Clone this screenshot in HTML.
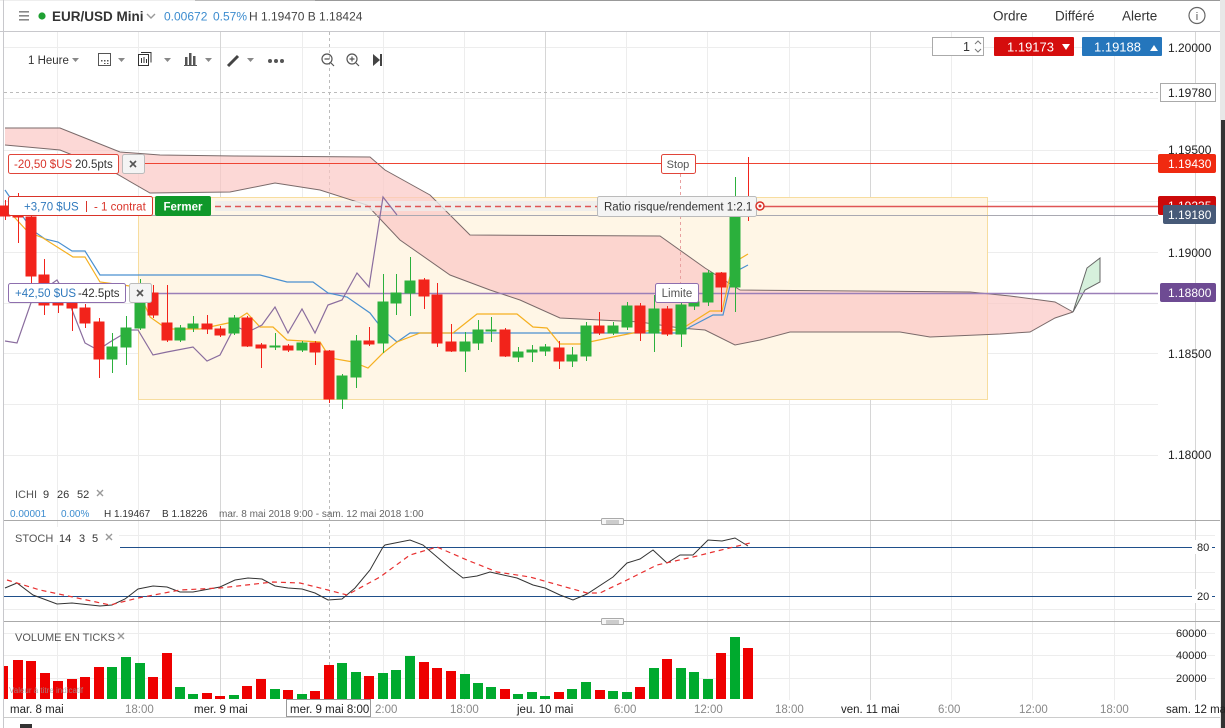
<!DOCTYPE html>
<html><head><meta charset="utf-8"><style>
html,body{margin:0;padding:0;width:1225px;height:728px;overflow:hidden;background:#fff;font-family:"Liberation Sans",sans-serif;}
svg{display:block}
text{font-family:"Liberation Sans",sans-serif}
</style></head><body>
<svg width="1225" height="728" viewBox="0 0 1225 728" xmlns="http://www.w3.org/2000/svg">
<rect x="0" y="0" width="1225" height="728" fill="#fff"/>
<line x1="0" y1="31.5" x2="1220" y2="31.5" stroke="#c8c8cc"/>
<line x1="195" y1="0.5" x2="315" y2="0.5" stroke="#bbb"/>
<line x1="0" y1="0.5" x2="195" y2="0.5" stroke="#eee"/>
<line x1="315" y1="0.5" x2="1220" y2="0.5" stroke="#999"/>
<line x1="3.5" y1="0" x2="3.5" y2="728" stroke="#c8c8cc"/>
<rect x="1220" y="0" width="5" height="728" fill="#e8e8e8"/>
<rect x="1221" y="120" width="4" height="608" fill="#333"/>
<g fill="#888"><rect x="19" y="11" width="10" height="1.6"/><rect x="19" y="15" width="10" height="1.6"/><rect x="19" y="19" width="10" height="1.6"/></g>
<circle cx="42" cy="16" r="3.6" fill="#1ea032"/>
<text x="52" y="21" font-size="13.5" font-weight="bold" fill="#333">EUR/USD Mini</text>
<path d="M147 14 l4 4 l4 -4" stroke="#999" fill="none" stroke-width="1.4"/>
<text x="164" y="20.5" font-size="12" fill="#3c8ccf">0.00672</text>
<text x="213" y="20.5" font-size="12" fill="#3c8ccf">0.57%</text>
<text x="249" y="20.5" font-size="12" fill="#444">H 1.19470 B 1.18424</text>
<text x="993" y="20.5" font-size="13.5" fill="#333">Ordre</text>
<text x="1055" y="20.5" font-size="13.5" fill="#333">Différé</text>
<text x="1122" y="20.5" font-size="13.5" fill="#333">Alerte</text>
<circle cx="1197" cy="15.5" r="8" fill="none" stroke="#666" stroke-width="1.2"/>
<text x="1197" y="20" font-size="11" fill="#555" text-anchor="middle" font-family="Liberation Serif">i</text>

<g stroke="#ededed" stroke-width="1">
<line x1="57.5" y1="32" x2="57.5" y2="700"/><line x1="138.5" y1="32" x2="138.5" y2="700"/>
<line x1="302.5" y1="32" x2="302.5" y2="700"/><line x1="383.5" y1="32" x2="383.5" y2="700"/><line x1="464.5" y1="32" x2="464.5" y2="700"/>
<line x1="626.5" y1="32" x2="626.5" y2="700"/><line x1="707.5" y1="32" x2="707.5" y2="700"/><line x1="789.5" y1="32" x2="789.5" y2="700"/>
<line x1="951.5" y1="32" x2="951.5" y2="700"/><line x1="1032.5" y1="32" x2="1032.5" y2="700"/><line x1="1114.5" y1="32" x2="1114.5" y2="700"/>
<line x1="4" y1="47.5" x2="1158" y2="47.5"/><line x1="4" y1="98.5" x2="1158" y2="98.5"/><line x1="4" y1="150.5" x2="1158" y2="150.5"/>
<line x1="4" y1="201.5" x2="1158" y2="201.5"/><line x1="4" y1="252.5" x2="1158" y2="252.5"/><line x1="4" y1="303.5" x2="1158" y2="303.5"/>
<line x1="4" y1="353.5" x2="1158" y2="353.5"/><line x1="4" y1="404.5" x2="1158" y2="404.5"/><line x1="4" y1="455.5" x2="1158" y2="455.5"/>
<line x1="4" y1="572.5" x2="1215" y2="572.5"/><line x1="4" y1="535.5" x2="1215" y2="535.5"/><line x1="4" y1="609.5" x2="1215" y2="609.5"/>
<line x1="4" y1="633.5" x2="1215" y2="633.5"/><line x1="4" y1="655.5" x2="1215" y2="655.5"/><line x1="4" y1="678.5" x2="1215" y2="678.5"/>
</g>
<g stroke="#d6d6d6"><line x1="220.5" y1="32" x2="220.5" y2="700"/><line x1="545.5" y1="32" x2="545.5" y2="700"/><line x1="870.5" y1="32" x2="870.5" y2="700"/><line x1="1195.5" y1="32" x2="1195.5" y2="700"/></g>
<line x1="329.5" y1="32" x2="329.5" y2="700" stroke="#bbb" stroke-dasharray="3,3"/>
<line x1="4" y1="92.5" x2="1158" y2="92.5" stroke="#bbb" stroke-dasharray="3,3"/>

<text x="28" y="64" font-size="11.5" fill="#333">1 Heure</text>
<path d="M72 58 h7 l-3.5 4z" fill="#888"/>
<rect x="98.5" y="53.5" width="12" height="12" fill="none" stroke="#555"/><g fill="#555"><rect x="101" y="60" width="1.5" height="1.5"/><rect x="104" y="60" width="1.5" height="1.5"/><rect x="107" y="60" width="1.5" height="1.5"/><rect x="104" y="63" width="1.5" height="1"/><rect x="107" y="63" width="1.5" height="1"/></g>
<path d="M118 58 h7 l-3.5 4z" fill="#888"/>
<rect x="138.5" y="54.5" width="10" height="11" fill="none" stroke="#333"/><path d="M141 52.5 h10 v10" fill="none" stroke="#333"/><path d="M141.5 58v5M144 57v6M146.5 59v4" stroke="#333"/>
<path d="M164 58 h7 l-3.5 4z" fill="#888"/>
<g fill="#555"><rect x="185" y="57" width="2.5" height="8"/><rect x="189" y="53" width="2.5" height="12"/><rect x="193" y="56" width="2.5" height="9"/><rect x="184" y="65" width="13" height="1"/></g>
<path d="M205 58 h7 l-3.5 4z" fill="#888"/>
<path d="M228 66 l10 -10" stroke="#444" stroke-width="3"/>
<path d="M247 58 h7 l-3.5 4z" fill="#888"/>
<g fill="#555"><circle cx="270" cy="61" r="2"/><circle cx="276" cy="61" r="2"/><circle cx="282" cy="61" r="2"/></g>
<circle cx="327" cy="59" r="5" fill="none" stroke="#555" stroke-width="1.2"/><path d="M324.5 59h5M331 63l3 3" stroke="#555" stroke-width="1.2"/>
<circle cx="352" cy="59" r="5" fill="none" stroke="#555" stroke-width="1.2"/><path d="M349.5 59h5M352 56.5v5M356 63l3 3" stroke="#555" stroke-width="1.2"/>
<path d="M373 54 l7 6 l-7 6z" fill="#444"/><rect x="380" y="54" width="2" height="12" fill="#444"/>

<rect x="932.5" y="37.5" width="51" height="18" fill="#fff" stroke="#aaa"/>
<text x="970" y="51" font-size="12.5" fill="#333" text-anchor="end">1</text>
<path d="M975 44 l3 -3 l3 3M975 49 l3 3 l3 -3" fill="none" stroke="#777"/>
<rect x="994" y="37" width="80" height="19" fill="#d50d0d" rx="1"/>
<text x="1007" y="51.5" font-size="13" fill="#fff">1.19173</text><path d="M1062 44 h8 l-4 6z" fill="#fff"/>
<rect x="1082" y="37" width="80" height="19" fill="#2576bc" rx="1"/>
<text x="1094" y="51.5" font-size="13" fill="#fff">1.19188</text><path d="M1150 51 h8 l-4 -6z" fill="#fff"/>

<rect x="138.5" y="197.5" width="849" height="202" fill="#fff6e6" stroke="#f7dd9f"/>

<path d="M5 128 L60 128 L90 140 L120 152 L160 155 L235 156 L370 157 L385 170 L430 195 L470 235 L660 236 L705 268 L740 290 L970 292 L1010 296 L1055 302 L1073 312 L1055 318 L1030 332 L1000 334 L930 337 L900 332 L790 332 L760 340 L735 345 L705 330 L680 328 L640 322 L600 320 L560 318 L520 300 L490 290 L450 275 L400 240 L367 205 L320 190 L275 183 L230 192 L150 193 L110 170 L60 150 L5 145 Z" fill="#fbc8c5" fill-opacity="0.7"/>
<path d="M5 128 L60 128 L90 140 L120 152 L160 155 L235 156 L370 157 L385 170 L430 195 L470 235 L660 236 L705 268 L740 290 L970 292 L1010 296 L1055 302 L1073 312" fill="none" stroke="#7a6a6a" stroke-width="1"/>
<path d="M5 145 L60 150 L110 170 L150 193 L230 192 L275 183 L320 190 L367 205 L400 240 L450 275 L490 290 L520 300 L560 318 L600 320 L640 322 L680 328 L705 330 L735 345 L760 340 L790 332 L900 332 L930 337 L1000 334 L1030 332 L1055 318 L1073 312" fill="none" stroke="#7a6a6a" stroke-width="1"/>
<path d="M1073 312 L1087 268 L1100 258 L1100 282 L1085 290 Z" fill="#d6f0dc" stroke="#666" stroke-width="1"/>

<line x1="145" y1="163.5" x2="1158" y2="163.5" stroke="#ee4433"/>
<line x1="4" y1="215.5" x2="1158" y2="215.5" stroke="#a9a9b2"/>
<rect x="215" y="201" width="545" height="10" fill="#ececec" opacity="0.8"/>
<line x1="215" y1="206.5" x2="760" y2="206.5" stroke="#e05555" stroke-width="1.5" stroke-dasharray="6,4"/>
<line x1="760" y1="206.5" x2="1158" y2="206.5" stroke="#e05555" stroke-width="1.5"/>
<line x1="155" y1="293.5" x2="1158" y2="293.5" stroke="#9b7fb8" stroke-width="1.5"/>
<line x1="680.5" y1="174" x2="680.5" y2="283" stroke="#e8a0a0" stroke-dasharray="3,3"/>

<polyline fill="none" stroke="#4a90d0" stroke-width="1.2" points="5,190 32,230 45,239 58,242 72,251 85,251 100,275 260,275 287,282 313,282 328,293 347,297 370,313 383,330 397,342 410,333 680,333 690,327 713,315 723,315 733,273 748,265"/>
<polyline fill="none" stroke="#f5b020" stroke-width="1.2" points="5,207 28,232 43,238 73,257 85,257 100,282 137,287 150,317 167,329 200,329 233,322 247,313 260,327 273,327 287,340 320,342 330,358 353,362 368,368 383,353 397,342 420,333 453,333 477,314 517,314 533,327 547,328 560,344 580,344 613,337 633,333 653,330 680,330 710,311 722,311 733,263 748,254"/>
<polyline fill="none" stroke="#8a6d9e" stroke-width="1.2" points="5,341 17,343 33,297 57,280 67,297 85,343 98,350 110,342 130,330 138,330 153,355 167,352 193,347 207,361 220,355 235,326 248,332 262,325 275,307 288,333 302,309 315,333 328,305 342,300 357,273 369,287 383,197 397,215"/>

<g>
<g stroke="#f2231b" fill="#f2231b">
<line x1="5.5" y1="200" x2="5.5" y2="220"/><rect x="0" y="206" width="10" height="10"/>
<line x1="18.5" y1="193" x2="18.5" y2="243"/><rect x="13" y="206" width="10" height="11"/>
<line x1="31.5" y1="200" x2="31.5" y2="285"/><rect x="26" y="217" width="10" height="59"/>
<line x1="44.5" y1="259" x2="44.5" y2="315"/><rect x="39" y="275" width="10" height="30"/>
<line x1="58.5" y1="283" x2="58.5" y2="313"/><rect x="53" y="297" width="10" height="8"/>
<line x1="72.5" y1="290" x2="72.5" y2="331"/><rect x="67" y="297" width="10" height="11"/>
<line x1="85.5" y1="304" x2="85.5" y2="328"/><rect x="80" y="308" width="10" height="15"/>
<line x1="99.5" y1="318" x2="99.5" y2="378"/><rect x="94" y="322" width="10" height="37"/>
<line x1="153.5" y1="285" x2="153.5" y2="318"/><rect x="148" y="293" width="10" height="22"/>
<line x1="167.5" y1="285" x2="167.5" y2="342"/><rect x="162" y="323" width="10" height="17"/>
<line x1="207.5" y1="315" x2="207.5" y2="334"/><rect x="202" y="324" width="10" height="5"/>
<line x1="220.5" y1="326" x2="220.5" y2="337"/><rect x="215" y="329" width="10" height="6"/>
<line x1="247.5" y1="316" x2="247.5" y2="347"/><rect x="242" y="318" width="10" height="28"/>
<line x1="261.5" y1="343" x2="261.5" y2="368"/><rect x="256" y="345" width="10" height="3"/>
<line x1="288.5" y1="344" x2="288.5" y2="352"/><rect x="283" y="346" width="10" height="4"/>
<line x1="315.5" y1="341" x2="315.5" y2="365"/><rect x="310" y="343" width="10" height="9"/>
<line x1="329.5" y1="350" x2="329.5" y2="403"/><rect x="324" y="351" width="10" height="48"/>
<line x1="369.5" y1="327" x2="369.5" y2="346"/><rect x="364" y="341" width="10" height="3"/>
<line x1="424.5" y1="278" x2="424.5" y2="309"/><rect x="419" y="280" width="10" height="16"/>
<line x1="437.5" y1="283" x2="437.5" y2="347"/><rect x="432" y="295" width="10" height="48"/>
<line x1="451.5" y1="324" x2="451.5" y2="352"/><rect x="446" y="342" width="10" height="9"/>
<line x1="505.5" y1="328" x2="505.5" y2="357"/><rect x="500" y="330" width="10" height="26"/>
<line x1="559.5" y1="341" x2="559.5" y2="369"/><rect x="554" y="348" width="10" height="13"/>
<line x1="599.5" y1="312" x2="599.5" y2="335"/><rect x="594" y="326" width="10" height="7"/>
<line x1="640.5" y1="303" x2="640.5" y2="341"/><rect x="635" y="306" width="10" height="27"/>
<line x1="667.5" y1="306" x2="667.5" y2="336"/><rect x="662" y="309" width="10" height="25"/>
<line x1="721.5" y1="272" x2="721.5" y2="312"/><rect x="716" y="273" width="10" height="14"/>
<line x1="748.5" y1="157" x2="748.5" y2="221"/><rect x="744" y="206" width="9" height="2"/>
</g>
<g stroke="#2bb03c" fill="#2bb03c">
<line x1="112.5" y1="333" x2="112.5" y2="373"/><rect x="107" y="347" width="10" height="12"/>
<line x1="126.5" y1="316" x2="126.5" y2="365"/><rect x="121" y="328" width="10" height="19"/>
<line x1="140.5" y1="279" x2="140.5" y2="330"/><rect x="135" y="297" width="10" height="31"/>
<line x1="180.5" y1="325" x2="180.5" y2="342"/><rect x="175" y="328" width="10" height="12"/>
<line x1="193.5" y1="316" x2="193.5" y2="332"/><rect x="188" y="324" width="10" height="4"/>
<line x1="234.5" y1="315" x2="234.5" y2="335"/><rect x="229" y="318" width="10" height="15"/>
<line x1="275.5" y1="333" x2="275.5" y2="350"/><rect x="270" y="346" width="10" height="1"/>
<line x1="302.5" y1="341" x2="302.5" y2="352"/><rect x="297" y="343" width="10" height="7"/>
<line x1="342.5" y1="374" x2="342.5" y2="409"/><rect x="337" y="376" width="10" height="23"/>
<line x1="356.5" y1="335" x2="356.5" y2="388"/><rect x="351" y="341" width="10" height="36"/>
<line x1="383.5" y1="274" x2="383.5" y2="353"/><rect x="378" y="302" width="10" height="41"/>
<line x1="396.5" y1="274" x2="396.5" y2="315"/><rect x="391" y="293" width="10" height="10"/>
<line x1="410.5" y1="257" x2="410.5" y2="316"/><rect x="405" y="281" width="10" height="12"/>
<line x1="465.5" y1="332" x2="465.5" y2="372"/><rect x="460" y="342" width="10" height="9"/>
<line x1="478.5" y1="320" x2="478.5" y2="350"/><rect x="473" y="330" width="10" height="13"/>
<line x1="491.5" y1="317" x2="491.5" y2="342"/><rect x="486" y="330" width="10" height="1"/>
<line x1="518.5" y1="347" x2="518.5" y2="362"/><rect x="513" y="352" width="10" height="5"/>
<line x1="532.5" y1="345" x2="532.5" y2="362"/><rect x="527" y="350" width="10" height="2"/>
<line x1="545.5" y1="344" x2="545.5" y2="356"/><rect x="540" y="347" width="10" height="4"/>
<line x1="572.5" y1="347" x2="572.5" y2="367"/><rect x="567" y="355" width="10" height="6"/>
<line x1="586.5" y1="322" x2="586.5" y2="361"/><rect x="581" y="326" width="10" height="30"/>
<line x1="613.5" y1="322" x2="613.5" y2="335"/><rect x="608" y="326" width="10" height="7"/>
<line x1="627.5" y1="302" x2="627.5" y2="330"/><rect x="622" y="306" width="10" height="21"/>
<line x1="654.5" y1="295" x2="654.5" y2="352"/><rect x="649" y="309" width="10" height="24"/>
<line x1="681.5" y1="303" x2="681.5" y2="347"/><rect x="676" y="305" width="10" height="29"/>
<line x1="694.5" y1="298" x2="694.5" y2="310"/><rect x="689" y="302" width="10" height="4"/>
<line x1="708.5" y1="270" x2="708.5" y2="306"/><rect x="703" y="273" width="10" height="29"/>
<line x1="735.5" y1="177" x2="735.5" y2="312"/><rect x="730" y="216" width="10" height="71"/>
</g>
</g>

<rect x="8.5" y="154.5" width="110" height="19" fill="#fff" stroke="#e0453a" rx="2"/>
<text x="14" y="168" font-size="11.5" fill="#d9342a">-20,50 $US</text><text x="75" y="168" font-size="11.5" fill="#333">20.5pts</text>
<rect x="122.5" y="154.5" width="22" height="19" fill="#f4f4f4" stroke="#bbb" rx="2"/><path d="M130 161 l6 6 M136 161 l-6 6" stroke="#555" stroke-width="1.6"/>
<rect x="8.5" y="196.5" width="144" height="19" fill="#fff" stroke="#d9342a" rx="2"/>
<text x="24" y="210.5" font-size="11.5" fill="#2f79bd">+3,70 $US</text><line x1="86.5" y1="201" x2="86.5" y2="212" stroke="#d9342a"/><text x="94" y="210.5" font-size="11.5" fill="#d9342a">- 1 contrat</text>
<rect x="155" y="196" width="56" height="20" fill="#10982a" rx="2"/><text x="183" y="210.5" font-size="11.5" fill="#fff" text-anchor="middle" font-weight="bold">Fermer</text>
<rect x="8.5" y="283.5" width="117" height="19" fill="#fff" stroke="#8e6fae" rx="2"/>
<text x="15" y="297" font-size="11.5" fill="#2f79bd">+42,50 $US</text><text x="78" y="297" font-size="11.5" fill="#333">-42.5pts</text>
<rect x="129.5" y="283.5" width="22" height="19" fill="#f4f4f4" stroke="#bbb" rx="2"/><path d="M137 290 l6 6 M143 290 l-6 6" stroke="#555" stroke-width="1.6"/>
<rect x="661.5" y="154.5" width="34" height="19" fill="#fff" stroke="#e0453a" rx="2"/><text x="678" y="168" font-size="11" fill="#555" text-anchor="middle">Stop</text>
<rect x="597.5" y="196.5" width="159" height="20" fill="#f4f4f4" stroke="#bbb" rx="2"/><text x="604" y="210.5" font-size="11.5" fill="#333">Ratio risque/rendement 1:2.1</text>
<circle cx="760" cy="206" r="4" fill="#fff" stroke="#d9342a" stroke-width="1.5"/><circle cx="760" cy="206" r="1.5" fill="#d9342a"/>
<rect x="655.5" y="283.5" width="43" height="19" fill="#fff" stroke="#8e6fae" rx="2"/><text x="677" y="297" font-size="11.5" fill="#555" text-anchor="middle">Limite</text>

<text x="1168" y="52" font-size="12" fill="#222">1.20000</text>
<rect x="1160.5" y="83.5" width="55" height="18" fill="#fff" stroke="#aaa"/><text x="1168" y="97" font-size="12" fill="#222">1.19780</text>
<text x="1168" y="154" font-size="12" fill="#222">1.19500</text>
<rect x="1158" y="154" width="58" height="19" fill="#f02a10" rx="2"/><text x="1168" y="168" font-size="12" fill="#fff">1.19430</text>
<rect x="1158" y="196" width="58" height="19" fill="#cc0a0a" rx="2"/><text x="1168" y="210" font-size="12" fill="#fff">1.19235</text>
<rect x="1163" y="205" width="53" height="19" fill="#475a78" rx="2"/><text x="1168" y="219" font-size="12" fill="#fff">1.19180</text>
<text x="1168" y="257" font-size="12" fill="#222">1.19000</text>
<rect x="1160" y="283" width="56" height="19" fill="#6e4b93" rx="2"/><text x="1168" y="297" font-size="12" fill="#fff">1.18800</text>
<text x="1168" y="358" font-size="12" fill="#222">1.18500</text>
<text x="1168" y="459" font-size="12" fill="#222">1.18000</text>

<text x="15" y="498" font-size="11" fill="#555">ICHI</text><text x="43" y="498" font-size="11" fill="#333">9</text><text x="57" y="498" font-size="11" fill="#333">26</text><text x="77" y="498" font-size="11" fill="#333">52</text><path d="M97 490 l6 6 M103 490 l-6 6" stroke="#999" stroke-width="1.4"/>
<text x="10" y="517" font-size="10" fill="#3c8ccf">0.00001</text><text x="61" y="517" font-size="10" fill="#3c8ccf">0.00%</text>
<text x="104" y="517" font-size="10" fill="#333">H 1.19467</text><text x="162" y="517" font-size="10" fill="#333">B 1.18226</text>
<text x="219" y="517" font-size="10" fill="#666">mar. 8 mai 2018 9:00 - sam. 12 mai 2018 1:00</text>
<line x1="4" y1="520.5" x2="1220" y2="520.5" stroke="#aaa"/>
<rect x="601.5" y="518.5" width="22" height="6" fill="#f6f6f6" stroke="#aaa" rx="1"/><path d="M606 521h13M606 523h13" stroke="#888" stroke-width="0.7"/>

<rect x="4" y="527" width="115" height="18" fill="#fff"/>
<text x="15" y="542" font-size="11" fill="#555">STOCH</text><text x="59" y="542" font-size="11" fill="#333">14</text><text x="79" y="542" font-size="11" fill="#333">3</text><text x="92" y="542" font-size="11" fill="#333">5</text><path d="M106 534 l6 6 M112 534 l-6 6" stroke="#999" stroke-width="1.4"/>
<line x1="120" y1="547.5" x2="1215" y2="547.5" stroke="#1f4f8a"/>
<line x1="4" y1="596.5" x2="1215" y2="596.5" stroke="#1f4f8a"/>
<rect x="1192" y="540" width="20" height="14" fill="#fff"/><text x="1197" y="551" font-size="11" fill="#222">80</text>
<rect x="1192" y="589" width="20" height="14" fill="#fff"/><text x="1197" y="600" font-size="11" fill="#222">20</text>
<polyline fill="none" stroke="#333" stroke-width="1" points="5,588 17,583 33,595 57,604 72,603 100,606 112,605 125,599 138,589 153,586 167,587 180,592 193,592 220,587 235,580 248,578 262,579 275,586 288,588 302,589 315,593 328,600 342,599 355,588 370,570 383,547 385,545 410,540 423,545 450,568 463,578 477,576 490,572 517,578 533,585 545,588 560,595 573,600 587,594 613,577 627,563 640,559 653,550 667,563 680,555 693,555 708,540 722,541 735,538 748,546"/>
<polyline fill="none" stroke="#e83030" stroke-width="1.2" stroke-dasharray="5,4" points="7,580 40,590 110,605 138,598 180,590 220,588 273,582 300,583 328,590 347,595 380,577 410,555 437,547 467,560 497,572 530,577 587,593 600,593 627,580 657,565 693,557 713,552 750,543"/>
<line x1="4" y1="621.5" x2="1220" y2="621.5" stroke="#aaa"/>
<rect x="601.5" y="618.5" width="22" height="6" fill="#f6f6f6" stroke="#aaa" rx="1"/><path d="M606 621h13M606 623h13" stroke="#888" stroke-width="0.7"/>

<text x="15" y="641" font-size="11" fill="#555">VOLUME EN TICKS</text><path d="M118 633 l6 6 M124 633 l-6 6" stroke="#999" stroke-width="1.4"/>
<text x="1176" y="637" font-size="11" fill="#222">60000</text>
<text x="1176" y="659" font-size="11" fill="#222">40000</text>
<text x="1176" y="682" font-size="11" fill="#222">20000</text>
<g fill="#ee0000">
<rect x="4" y="666" width="4" height="33"/><rect x="13" y="660" width="10" height="39"/><rect x="26" y="661" width="10" height="38"/><rect x="40" y="673" width="10" height="26"/>
<rect x="53" y="681" width="10" height="18"/><rect x="67" y="679" width="10" height="20"/><rect x="80" y="677" width="10" height="22"/><rect x="94" y="667" width="10" height="32"/>
<rect x="148" y="677" width="10" height="22"/><rect x="162" y="653" width="10" height="46"/><rect x="202" y="693" width="10" height="6"/><rect x="215" y="696" width="10" height="3"/>
<rect x="242" y="686" width="10" height="13"/><rect x="256" y="679" width="10" height="20"/><rect x="283" y="690" width="10" height="9"/><rect x="310" y="691" width="10" height="8"/>
<rect x="324" y="665" width="10" height="34"/><rect x="364" y="676" width="10" height="23"/><rect x="419" y="662" width="10" height="37"/><rect x="432" y="668" width="10" height="31"/>
<rect x="446" y="671" width="10" height="28"/><rect x="500" y="689" width="10" height="10"/><rect x="554" y="692" width="10" height="7"/><rect x="595" y="690" width="10" height="9"/>
<rect x="635" y="687" width="10" height="12"/><rect x="662" y="659" width="10" height="40"/><rect x="716" y="653" width="10" height="46"/><rect x="743" y="648" width="10" height="51"/>
</g>
<g fill="#00aa2e">
<rect x="107" y="667" width="10" height="32"/><rect x="121" y="657" width="10" height="42"/><rect x="135" y="663" width="10" height="36"/><rect x="175" y="687" width="10" height="12"/>
<rect x="188" y="694" width="10" height="5"/><rect x="229" y="695" width="10" height="4"/><rect x="270" y="689" width="10" height="10"/><rect x="297" y="694" width="10" height="5"/>
<rect x="337" y="663" width="10" height="36"/><rect x="351" y="672" width="10" height="27"/><rect x="378" y="673" width="10" height="26"/><rect x="391" y="670" width="10" height="29"/>
<rect x="405" y="656" width="10" height="43"/><rect x="460" y="674" width="10" height="25"/><rect x="473" y="683" width="10" height="16"/><rect x="486" y="687" width="10" height="12"/>
<rect x="513" y="694" width="10" height="5"/><rect x="527" y="692" width="10" height="7"/><rect x="540" y="696" width="10" height="3"/><rect x="567" y="689" width="10" height="10"/>
<rect x="581" y="682" width="10" height="17"/><rect x="608" y="691" width="10" height="8"/><rect x="622" y="692" width="10" height="7"/><rect x="649" y="668" width="10" height="31"/>
<rect x="676" y="668" width="10" height="31"/><rect x="689" y="672" width="10" height="27"/><rect x="703" y="679" width="10" height="20"/><rect x="730" y="637" width="10" height="62"/>
</g>
<text x="9" y="693" font-size="8" fill="#999" opacity="0.8">Valeur à titre indicatif</text>

<text x="10" y="713" font-size="11.5" fill="#222">mar. 8 mai</text>
<text x="125" y="713" font-size="11.5" fill="#888">18:00</text>
<text x="194" y="713" font-size="11.5" fill="#222">mer. 9 mai</text>
<rect x="286.5" y="699.5" width="84" height="17" fill="#fff" stroke="#999"/>
<text x="290" y="713" font-size="11.5" fill="#222">mer. 9 mai 8:00</text>
<text x="375" y="713" font-size="11.5" fill="#888">2:00</text>
<text x="450" y="713" font-size="11.5" fill="#888">18:00</text>
<text x="517" y="713" font-size="11.5" fill="#222">jeu. 10 mai</text>
<text x="614" y="713" font-size="11.5" fill="#888">6:00</text>
<text x="694" y="713" font-size="11.5" fill="#888">12:00</text>
<text x="775" y="713" font-size="11.5" fill="#888">18:00</text>
<text x="841" y="713" font-size="11.5" fill="#222">ven. 11 mai</text>
<text x="938" y="713" font-size="11.5" fill="#888">6:00</text>
<text x="1019" y="713" font-size="11.5" fill="#888">12:00</text>
<text x="1100" y="713" font-size="11.5" fill="#888">18:00</text>
<text x="1166" y="713" font-size="11.5" fill="#222">sam. 12 mai</text>
<line x1="4" y1="717.5" x2="1220" y2="717.5" stroke="#ccc"/>
<rect x="20" y="724" width="12" height="4" fill="#333"/>
</svg>
</body></html>
